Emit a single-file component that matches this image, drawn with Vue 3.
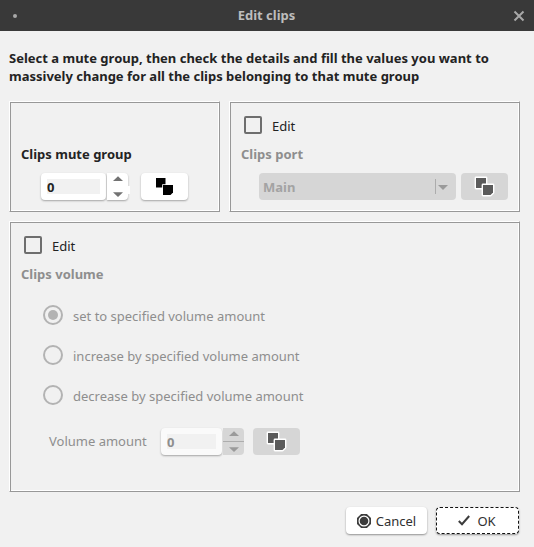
<script setup>
import { ref } from 'vue'

const options = [
  { id: 'set', label: 'set to specified volume amount' },
  { id: 'increase', label: 'increase by specified volume amount' },
  { id: 'decrease', label: 'decrease by specified volume amount' },
]
const mode = ref('set')
const muteGroup = ref(0)
const step = (n) => { muteGroup.value = Math.max(0, muteGroup.value + n) }
</script>

<template>
  <div class="dialog">
    <header class="titlebar">
      <span class="dot"></span>
      <span class="title">Edit clips</span>
      <svg class="close" width="12" height="12" viewBox="0 0 12 12"><path d="M1.5 1.5 10.5 10.5M10.5 1.5 1.5 10.5" /></svg>
    </header>

    <main class="content">
      <p class="intro">Select a mute group, then check the details and fill the values you want to<br />massively change for all the clips belonging to that mute group</p>

      <div class="top">
        <section class="frame group">
          <h2>Clips mute group</h2>
          <div class="row group-row">
            <div class="field"><span class="value">{{ muteGroup }}</span></div>
            <div class="arrows live">
              <svg width="22" height="27" viewBox="0 0 22 27">
                <path d="M6 8 11 3.2 16 8Z" @click="step(1)" /><path d="M6 19.3H16L11 24Z" @click="step(-1)" />
              </svg>
            </div>
            <button class="copy">
              <svg width="21" height="21" viewBox="0 0 21 21"><path d="M2 2h9.5v9.5H2z" /><path class="front" d="M9 9h10v7.5l-2.5 2.5H9z" /></svg>
            </button>
          </div>
        </section>

        <section class="frame port">
          <label class="check"><span class="box"></span><span class="name">Edit</span></label>
          <h2 class="off">Clips port</h2>
          <div class="row port-row">
            <div class="combo">
              <span>Main</span>
              <svg width="16" height="16" viewBox="0 0 16 16"><path class="bar" d="M.5 0V15" /><path d="M3 6H13L8 11Z" /></svg>
            </div>
            <button class="copy off" disabled>
              <svg width="21" height="21" viewBox="0 0 21 21"><path d="M2 2h10v10H2z" /><path class="front" d="M9 9h10v7.5l-2.5 2.5H9z" /></svg>
            </button>
          </div>
        </section>
      </div>

      <section class="frame volume">
        <label class="check"><span class="box"></span><span class="name">Edit</span></label>
        <h2 class="off">Clips volume</h2>
        <div class="radios">
          <label v-for="o in options" :key="o.id" class="radio" :class="{ on: mode === o.id }">
            <span class="ring"></span><span>{{ o.label }}</span>
          </label>
        </div>
        <div class="row amount-row">
          <span class="caption">Volume amount</span>
          <div class="field off"><span class="value">0</span></div>
          <div class="arrows off">
            <svg width="22" height="27" viewBox="0 0 22 27">
              <path d="M6 8 11 3.2 16 8Z" /><path d="M6 19.3H16L11 24Z" /><path class="split" d="M0 13.5H22" />
            </svg>
          </div>
          <button class="copy off" disabled>
            <svg width="21" height="21" viewBox="0 0 21 21"><path d="M2 2h10v10H2z" /><path class="front" d="M9 9h10v7.5l-2.5 2.5H9z" /></svg>
          </button>
        </div>
      </section>

      <footer class="actions">
        <button class="action cancel">
          <svg width="14" height="14" viewBox="0 0 14 14"><path d="M4.1 0H9.9L14 4.1V9.9L9.9 14H4.1L0 9.9V4.1Z" fill="#3c3c3c" /><circle cx="7" cy="7" r="4.9" fill="#3c3c3c" stroke="#fff" stroke-width="1.2" /></svg>
          Cancel
        </button>
        <button class="action ok">
          <svg width="12" height="11" viewBox="0 0 12 11"><path d="M.8 6 4 9.2 11.2 1" fill="none" stroke="#3c3c3c" stroke-width="2" /></svg>
          OK
        </button>
      </footer>
    </main>
  </div>
</template>

<style>
body { margin: 0; background: #f1f1f1; }
</style>

<style scoped>
.dialog {
  box-sizing: border-box;
  width: 534px;
  height: 547px;
  background: #f1f1f1;
  color: #232323;
  font: 13px/18px "Noto Sans", sans-serif;
}
.dialog * { box-sizing: border-box; }
.titlebar {
  display: flex;
  align-items: center;
  justify-content: space-between;
  height: 31px;
  padding: 0 9px 0 13px;
  background: #393939;
  color: #bdbdbd;
}
.title { font-weight: 700; padding: 0 0 2px 3px; }
.dot { width: 4px; height: 4px; border-radius: 50%; background: #a8a8a8; }
.close { fill: none; stroke: #a8a8a8; stroke-width: 2; }
.content { padding: 18px 14px 0 9px; }
.intro { margin: 0 0 16px; font-weight: 700; white-space: nowrap; }
.top { display: flex; gap: 9px; margin-bottom: 9px; }
.frame {
  border: 1px solid;
  border-color: #fff #989898 #989898 #fff;
  box-shadow: inset 1px 1px #989898, inset -1px -1px #fff;
}
.group { width: 211px; height: 111px; padding: 43px 0 0 11px; }
.port { width: 291px; height: 111px; padding: 14px 0 0 11px; }
.volume { width: 511px; height: 271px; padding: 14px 0 0 11px; }
h2 { margin: 0; font-size: 13px; line-height: 18px; font-weight: 700; }
h2.off { color: #8e8e8e; margin-top: 11px; }
.check { display: flex; align-items: center; gap: 10px; height: 18px; padding-left: 3px; }
.check .box { width: 18px; height: 18px; border: 2px solid #6e6e6e; border-radius: 2px; }
.check .name { padding-top: 2px; }
.row { display: flex; height: 27px; align-items: stretch; }
.group-row { margin: 10px 0 0 20px; }
.port-row { margin: 10px 0 0 18px; gap: 5px; }
.field {
  width: 65px;
  padding: 6px;
  background: #fff;
  border-radius: 4px;
  box-shadow: 0 1px 2px rgba(0, 0, 0, .32);
}
.value { display: block; height: 15px; line-height: 17px; background: #f1f1f1; font-weight: 700; }
.arrows { width: 21px; margin-left: 1px; background: #fff; border-radius: 0 4px 4px 0; box-shadow: 0 1px 2px rgba(0, 0, 0, .32); }
.arrows svg { display: block; width: 22px; fill: #727272; }
/* small tab on the edge of the active stepper */
.live { display: flex; }
.live::after { content: ""; flex: none; width: 2px; height: 8px; margin: 13px 0 0 -1px; background: #fff; }
.live svg { flex: none; }
.copy {
  display: grid;
  place-items: center;
  width: 47px;
  padding: 0;
  border: 0;
  border-radius: 4px;
  background: #fff;
  box-shadow: 0 1px 2px rgba(0, 0, 0, .32);
}
.copy svg { overflow: visible; fill: #000; }
.copy .front { stroke: #fff; stroke-width: 1.6; paint-order: stroke; }
.group .copy { margin-left: 13px; }
.copy.off { background: #d6d6d6; box-shadow: none; }
.copy.off svg { fill: #5b5b5b; stroke: #fff; stroke-width: 2.8; paint-order: stroke; stroke-linejoin: round; }
.copy.off .front { stroke-width: 2.8; }
.combo {
  display: flex;
  align-items: center;
  justify-content: space-between;
  width: 197px;
  padding: 1px 5px 0 4px;
  border-radius: 4px;
  background: #d6d6d6;
  color: #a3a3a3;
  font-weight: 700;
}
.combo svg { fill: #9a9a9a; }
.combo .bar { stroke: #acacac; }
.radios { display: grid; gap: 20px; margin: 22px 0 0 22px; }
.radio { display: flex; align-items: center; gap: 10px; height: 20px; color: #8e8e8e; line-height: 22px; }
.radio > span:last-child { padding-top: 2px; }
.ring { display: grid; place-items: center; width: 20px; height: 20px; border: 2px solid #b3b3b3; border-radius: 50%; }
.on .ring::after { content: ""; width: 10px; height: 10px; border-radius: 50%; background: #b3b3b3; }
.amount-row { margin: 23px 0 0 28px; }
.caption { width: 112px; line-height: 27px; color: #8e8e8e; }
.field.off { width: 61px; background: #fafafa; color: #8e8e8e; }
.arrows.off { background: #d6d6d6; box-shadow: none; overflow: hidden; }
.arrows.off svg { fill: #9a9a9a; }
.split { stroke: #adadad; }
.volume .copy { margin-left: 9px; }
.actions { display: flex; justify-content: flex-end; gap: 9px; margin-top: 15px; padding-right: 1px; }
.action {
  display: flex;
  align-items: center;
  justify-content: center;
  height: 27px;
  padding: 0;
  border: 0;
  border-radius: 4px;
  background: #fff;
  color: #303030;
  font: 13px/18px "Noto Sans", sans-serif;
  box-shadow: 0 1px 2px rgba(0, 0, 0, .4);
}
.cancel { width: 81px; gap: 5px; }
.ok { width: 83px; gap: 7px; padding-right: 1px; border: 1px dashed #111; }
</style>
